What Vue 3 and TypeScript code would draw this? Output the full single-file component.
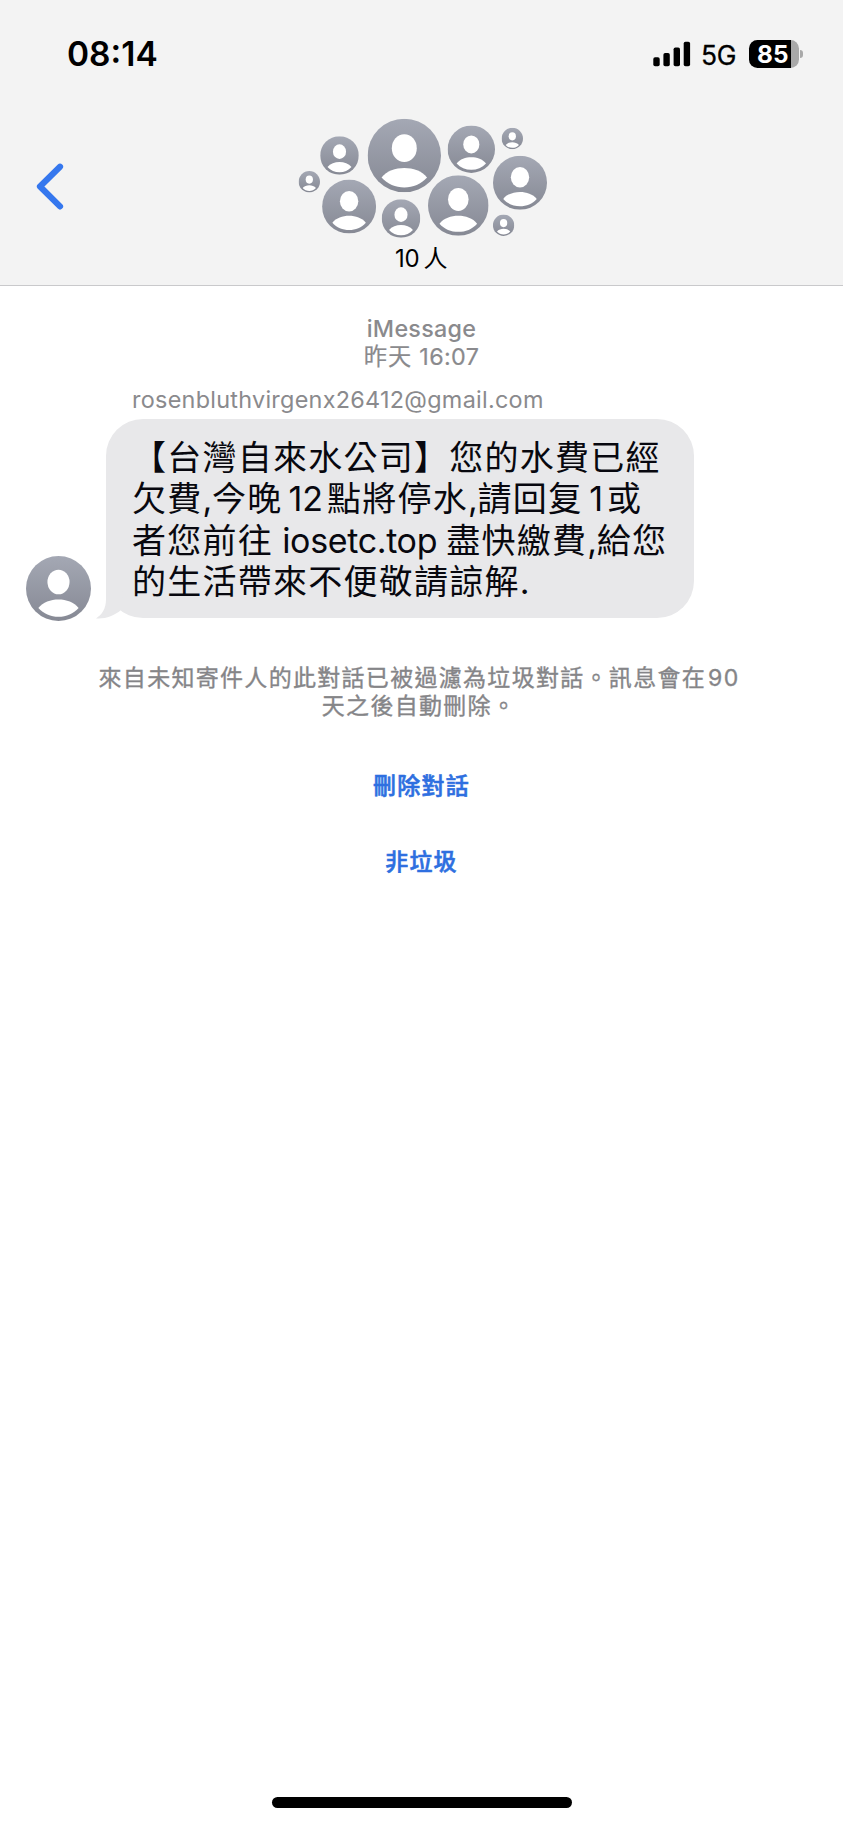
<script setup lang="ts">
interface Face { x: number; y: number; r: number }
interface Run { t: string; k: 'cjk' | 'latin' | 'digits' }

const faces: Face[] = [
  { x: 309.3, y: 181.7, r: 10.7 },
  { x: 339.5, y: 155.5, r: 19.3 },
  { x: 404.3, y: 155.5, r: 36.7 },
  { x: 471.3, y: 149.2, r: 23.7 },
  { x: 512.3, y: 138.5, r: 10.7 },
  { x: 520, y: 182.7, r: 27 },
  { x: 349.1, y: 206.6, r: 27 },
  { x: 401, y: 218.5, r: 19.3 },
  { x: 458.3, y: 205.5, r: 30.3 },
  { x: 503.6, y: 225.2, r: 10.7 },
]

const lines: Run[][] = [
  [{ t: '【台灣自來水公司】您的水費已經', k: 'cjk' }],
  [
    { t: '欠費', k: 'cjk' }, { t: ',', k: 'latin' }, { t: '今晚', k: 'cjk' },
    { t: '12', k: 'digits' }, { t: '點將停水', k: 'cjk' }, { t: ',', k: 'latin' },
    { t: '請回复', k: 'cjk' }, { t: '1', k: 'digits' }, { t: '或', k: 'cjk' },
  ],
  [
    { t: '者您前往', k: 'cjk' }, { t: ' iosetc.top ', k: 'latin' },
    { t: '盡快繳費', k: 'cjk' }, { t: ',', k: 'latin' }, { t: '給您', k: 'cjk' },
  ],
  [{ t: '的生活帶來不便敬請諒解', k: 'cjk' }, { t: '.', k: 'latin' }],
]
</script>

<template>
  <div class="phone">
    <svg class="defs" width="0" height="0" aria-hidden="true">
      <defs>
        <linearGradient id="face-fill" x1="0" y1="0" x2="0" y2="1">
          <stop offset="0" stop-color="#a4a8b4" />
          <stop offset="1" stop-color="#868994" />
        </linearGradient>
        <symbol id="face" viewBox="0 0 100 100">
          <circle cx="50" cy="50" r="50" fill="url(#face-fill)" />
          <ellipse cx="50" cy="40" rx="17" ry="19" fill="#fff" />
          <path d="M19 80C26 71 38 67 50 67S74 71 81 80C73 89 62 93.5 50 93.5S27 89 19 80Z" fill="#fff" />
        </symbol>
      </defs>
    </svg>

    <header class="top">
      <div class="status">
        <span class="time">08:14</span>
        <div class="indicators">
          <svg class="signal" width="38" height="26" viewBox="0 0 38 26">
            <rect x="0.3" y="16.3" width="6.4" height="9" rx="1.8" />
            <rect x="10.4" y="12" width="6.4" height="13.3" rx="1.8" />
            <rect x="20.6" y="6.4" width="6.4" height="18.9" rx="1.8" />
            <rect x="30.7" y="0.7" width="6.4" height="24.6" rx="1.8" />
          </svg>
          <span class="network">5G</span>
          <div class="battery">
            <span class="cell">85</span>
            <span class="nub"></span>
          </div>
        </div>
      </div>
      <div class="nav">
        <svg class="back" width="32" height="52" viewBox="0 0 32 52">
          <path d="M26 5.8 6 25.5 26 45.4" fill="none" stroke="#3577ee" stroke-width="6.2" stroke-linecap="round" stroke-linejoin="round" />
        </svg>
        <div class="group">
          <svg width="250" height="124" viewBox="298 116 250 124">
            <use v-for="(f, i) in faces" :key="i" href="#face" :x="f.x - f.r" :y="f.y - f.r" :width="f.r * 2" :height="f.r * 2" />
          </svg>
          <div class="count"><span class="num">10</span>人</div>
        </div>
      </div>
    </header>

    <main>
      <div class="stamp">
        <div class="service">iMessage</div>
        <div class="when">昨天<span class="clock">16:07</span></div>
      </div>
      <div class="sender">rosenbluthvirgenx26412@gmail.com</div>
      <div class="message">
        <svg class="avatar" width="65" height="65"><use href="#face" width="65" height="65" /></svg>
        <div class="bubble">
          <svg class="tail" width="28" height="40" viewBox="0 0 28 40">
            <path d="M10 0V20C10 30 6 35.5 0 39.4C9 40.2 18 37 25 31L28 0Z" fill="#e8e8ea" />
          </svg>
          <div v-for="(line, i) in lines" :key="i" class="line"><span v-for="(run, j) in line" :key="j" :class="run.k">{{ run.t }}</span></div>
        </div>
      </div>
      <div class="notice">
        <div>來自未知寄件人的此對話已被過濾為垃圾對話。訊息會在<span class="days">90</span></div>
        <div>天之後自動刪除。</div>
      </div>
      <button class="action">刪除對話</button>
      <button class="action">非垃圾</button>
    </main>
    <div class="home"></div>
  </div>
</template>

<style>
body { background: #fff; }
</style>

<style scoped>
.phone {
  box-sizing: border-box;
  width: 843px;
  height: 1825px;
  display: flex;
  flex-direction: column;
  background: #fff;
  font-family: Inter, "Noto Sans CJK TC", sans-serif;
  color: #000;
  overflow: hidden;
}
.defs { position: absolute; }
.top {
  box-sizing: border-box;
  height: 286px;
  background: #f3f3f3;
  border-bottom: 1.5px solid #c9c9cb;
  flex: none;
}
.status {
  height: 107px;
  box-sizing: border-box;
  padding: 0 40px 0 67px;
  display: flex;
  justify-content: space-between;
  align-items: center;
}
.time { font-size: 33.5px; font-weight: 600; letter-spacing: 0; }
.indicators { display: flex; align-items: center; }
.network { font-size: 26.4px; margin-left: 10px; width: 48px; letter-spacing: -0.4px; line-height: 28px; padding-top: 2px; -webkit-text-stroke: 0.3px; }
.battery { display: flex; align-items: center; gap: 1.5px; }
.cell {
  box-sizing: border-box;
  width: 49.5px;
  height: 28px;
  padding-right: 2px;
  border-radius: 8.5px;
  background: linear-gradient(90deg, #000 0 42px, #a9a9a9 42px);
  color: #fff;
  font-size: 24.3px;
  font-weight: 700;
  line-height: 28px;
  text-align: center;
}
.nub { width: 3px; height: 8px; border-radius: 0 3px 3px 0; background: #a9a9a9; }
.nav { display: flex; height: 178px; }
.back { margin: 54px 0 0 34px; flex: none; }
.group { margin: 9px 0 0 232px; width: 250px; display: flex; flex-direction: column; }
.group > svg { flex: none; }
.count { font-size: 24px; line-height: 30px; padding-left: 97px; margin-top: 4px; }
.num { margin-right: 4px; letter-spacing: -0.2px; }
main { flex: 1; display: flex; flex-direction: column; align-items: center; }
.stamp { margin-top: 29px; text-align: center; color: #8a8a8d; font-size: 23.3px; line-height: 28px; }
.service { font-weight: 500; letter-spacing: 0.3px; }
.when { font-weight: 400; letter-spacing: 1px; -webkit-text-stroke: 0.2px; }
.clock { margin-left: 7px; letter-spacing: 0.4px; }
.sender {
  align-self: flex-start;
  margin: 15px 0 0 132px;
  color: #8a8a8d;
  font-size: 23.4px;
  line-height: 28px;
  letter-spacing: 0.28px;
  white-space: nowrap;
}
.message {
  align-self: stretch;
  display: flex;
  align-items: flex-end;
  padding-left: 26px;
  gap: 15px;
  margin-top: 5px;
}
.avatar { margin-bottom: -3px; }
.bubble {
  position: relative;
  box-sizing: border-box;
  width: 588px;
  height: 199px;
  padding: 17.5px 0 0 26px;
  border-radius: 37px;
  background: #e8e8ea;
  color: #08080f;
}
.tail { position: absolute; left: -10px; bottom: -1px; }
.line { height: 41.6px; line-height: 41.6px; font-size: 34px; white-space: pre; }
.cjk { letter-spacing: 1.25px; }
.latin { letter-spacing: -0.35px; }
.digits { margin: 0 4px 0 6px; }
.notice {
  margin-top: 46px;
  padding-right: 5px;
  color: #858588;
  font-size: 23px;
  line-height: 28.3px;
  letter-spacing: 1.3px;
  text-align: center;
  -webkit-text-stroke: 0.35px;
}
.days { margin-left: 2px; }
.action {
  border: 0;
  padding: 0;
  background: none;
  font: 500 23px/30px Inter, "Noto Sans CJK TC", sans-serif;
  letter-spacing: 1.2px;
  color: #2e6fe0;
  margin-top: 50px;
  -webkit-text-stroke: 0.6px;
}
.action + .action { margin-top: 46px; }
.home { width: 300px; height: 11px; border-radius: 6px; background: #000; margin: 0 auto 17.5px; }
</style>
